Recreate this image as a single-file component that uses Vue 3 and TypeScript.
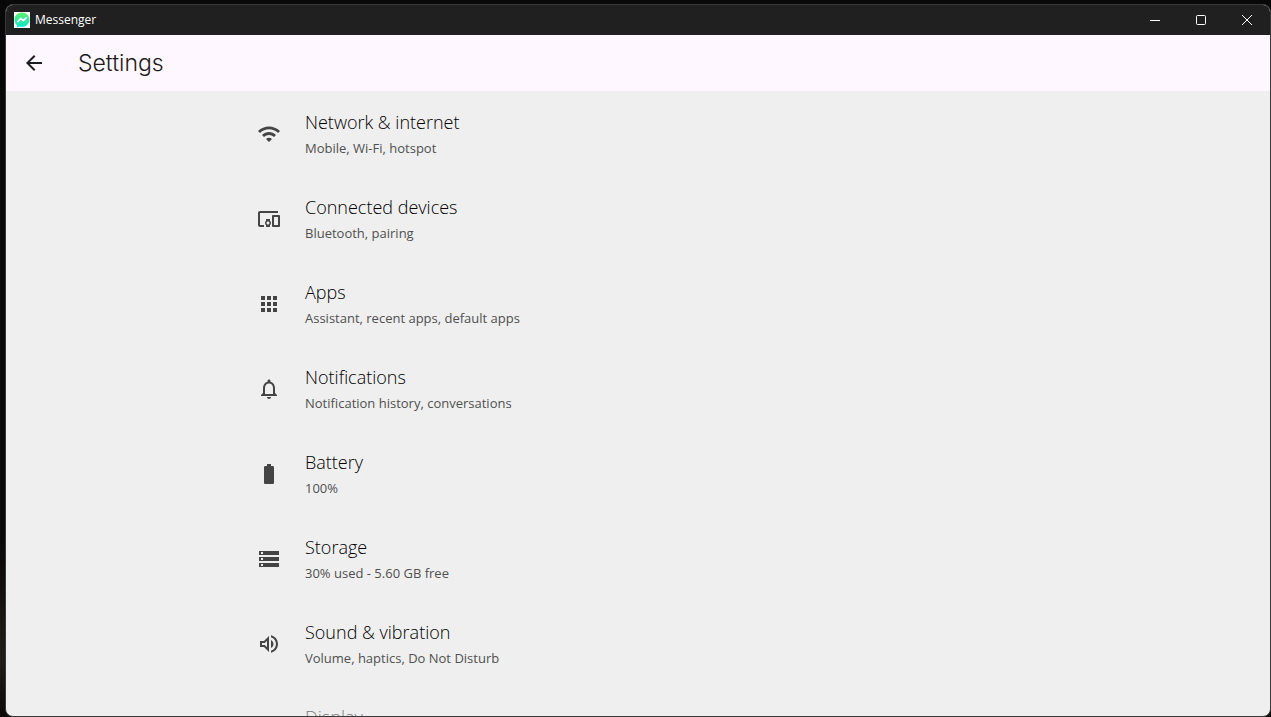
<script setup lang="ts">
interface SettingItem {
  title: string
  detail?: string
  icon: string
  faded?: boolean
}

const items: SettingItem[] = [
  {
    title: 'Network & internet',
    detail: 'Mobile, Wi-Fi, hotspot',
    icon: 'M1 9l2 2c4.970-4.970 13.030-4.970 18 0l2-2C16.930 2.930 7.080 2.930 1 9zm8 8l3 3 3-3c-1.650-1.660-4.340-1.660-6 0zm-4-4l2 2c2.760-2.760 7.240-2.760 10 0l2-2C15.140 9.140 8.870 9.140 5 13z',
  },
  {
    title: 'Connected devices',
    detail: 'Bluetooth, pairing',
    icon: 'M3 6h18V4H3c-1.100 0-2 .9-2 2v12c0 1.100.9 2 2 2h4v-2H3V6zm10 6H9v1.780c-.61.550-1 1.330-1 2.220s.39 1.670 1 2.220V20h4v-1.780c.61-.55 1-1.340 1-2.220s-.39-1.670-1-2.220V12zm-2 5.500c-.83 0-1.500-.67-1.500-1.500s.67-1.500 1.500-1.500 1.500.67 1.500 1.500-.67 1.500-1.500 1.500zM22 8h-6c-.5 0-1 .5-1 1v10c0 .5.5 1 1 1h6c.5 0 1-.5 1-1V9c0-.5-.5-1-1-1zm-1 10h-4v-8h4v8z',
  },
  {
    title: 'Apps',
    detail: 'Assistant, recent apps, default apps',
    icon: 'M4 8h4V4H4v4zm6 12h4v-4h-4v4zm-6 0h4v-4H4v4zm0-6h4v-4H4v4zm6 0h4v-4h-4v4zm6-10v4h4V4h-4zm-6 4h4V4h-4v4zm6 6h4v-4h-4v4zm0 6h4v-4h-4v4z',
  },
  {
    title: 'Notifications',
    detail: 'Notification history, conversations',
    icon: 'M12 22c1.100 0 2-.9 2-2h-4c0 1.100.9 2 2 2zm6-6v-5c0-3.070-1.630-5.640-4.500-6.320V4c0-.83-.67-1.500-1.500-1.500s-1.500.67-1.500 1.500v.68C7.640 5.360 6 7.920 6 11v5l-2 2v1h16v-1l-2-2zm-2 1H8v-6c0-2.480 1.510-4.500 4-4.500s4 2.020 4 4.500v6z',
  },
  {
    title: 'Battery',
    detail: '100%',
    icon: 'M15.670 4H14V2h-4v2H8.330C7.600 4 7 4.600 7 5.330v15.330C7 21.400 7.600 22 8.330 22h7.330c.74 0 1.340-.6 1.340-1.330V5.330C17 4.600 16.400 4 15.670 4z',
  },
  {
    title: 'Storage',
    detail: '30% used - 5.60 GB free',
    icon: 'M2 20h20v-4H2v4zm2-3h2v2H4v-2zM2 4v4h20V4H2zm4 3H4V5h2v2zm-4 7h20v-4H2v4zm2-3h2v2H4v-2z',
  },
  {
    title: 'Sound & vibration',
    detail: 'Volume, haptics, Do Not Disturb',
    icon: 'M3 9v6h4l5 5V4L7 9H3zm7-.17v6.340L7.830 13H5v-2h2.830L10 8.830zM16.500 12c0-1.770-1.020-3.290-2.500-4.030v8.050c1.480-.73 2.500-2.250 2.500-4.020zM14 3.230v2.060c2.890.86 5 3.540 5 6.710s-2.110 5.850-5 6.710v2.060c4.010-.91 7-4.490 7-8.770s-2.990-7.860-7-8.770z',
  },
  {
    title: 'Display',
    icon: '',
    faded: true,
  },
]
</script>

<template>
  <div class="desktop">
    <div class="window">
      <header class="titlebar">
        <svg class="logo" viewBox="0 0 16 16" aria-hidden="true">
          <defs>
            <linearGradient id="bubble" x1="0" y1="0" x2="0" y2="1">
              <stop offset="0" stop-color="#5df06c" />
              <stop offset="1" stop-color="#10e3d2" />
            </linearGradient>
          </defs>
          <path fill="#fff" d="M0 0h16v16H0z" />
          <path fill="url(#bubble)" d="M8 .5C3.700.5.5 3.600.5 7.700c0 2.200.9 4 2.300 5.300v2.500l2.500-1.100c.9.250 1.800.4 2.700.4 4.300 0 7.500-3.100 7.500-7.100S12.300.5 8 .5z" />
          <path d="M3.800 9.700 6.600 6.400 9.300 8.600 12.200 5.800" fill="none" stroke="#fff" stroke-width="1.600" stroke-linejoin="round" stroke-linecap="round" />
        </svg>
        <span class="app-name">Messenger</span>
        <div class="controls">
          <button type="button" aria-label="Minimize">
            <svg viewBox="0 0 12 12"><path d="M1 6.500h10" /></svg>
          </button>
          <button type="button" aria-label="Maximize">
            <svg viewBox="0 0 12 12"><rect x="1.500" y="1.500" width="9" height="9" rx="1" /></svg>
          </button>
          <button type="button" aria-label="Close">
            <svg viewBox="0 0 12 12"><path d="M1 1l10 10M11 1L1 11" /></svg>
          </button>
        </div>
      </header>
      <div class="appbar">
        <button class="back" type="button" aria-label="Back">
          <svg viewBox="0 0 24 24"><path d="M20 11H7.830l5.590-5.590L12 4l-8 8 8 8 1.410-1.410L7.830 13H20v-2z" /></svg>
        </button>
        <h1>Settings</h1>
      </div>
      <main class="content">
        <ul class="list">
          <li v-for="item in items" :key="item.title">
            <button class="row" :class="{ faded: item.faded }" type="button">
              <svg class="icon" viewBox="0 0 24 24" aria-hidden="true"><path :d="item.icon" /></svg>
              <span class="labels">
                <span class="title">{{ item.title }}</span>
                <span v-if="item.detail" class="detail">{{ item.detail }}</span>
              </span>
            </button>
          </li>
        </ul>
      </main>
    </div>
  </div>
</template>

<style>
body {
  margin: 0;
  background: #080808;
}
</style>

<style scoped>
.desktop {
  box-sizing: border-box;
  height: 100vh;
  padding: 4px 0 0 5px;
  background: linear-gradient(#080808 75%, #211c19 92%, #0c0909);
  font-family: "Segoe UI", "Open Sans", "Noto Sans", sans-serif;
}
.window {
  box-sizing: border-box;
  height: 100%;
  display: flex;
  flex-direction: column;
  overflow: hidden;
  border: 1px solid #383838;
  border-radius: 8px;
  background: #efefef;
}
.titlebar {
  flex: none;
  height: 30px;
  display: flex;
  align-items: center;
  padding-left: 8px;
  background: #202020;
  color: #fff;
}
.logo {
  width: 16px;
  height: 16px;
  margin-right: 5px;
}
.app-name {
  font-size: 12px;
  line-height: 16px;
}
.controls {
  display: flex;
  height: 100%;
  margin-left: auto;
}
button {
  border: 0;
  padding: 0;
  margin: 0;
  background: none;
  color: inherit;
  font: inherit;
  text-align: left;
}
.controls button {
  width: 46px;
  display: flex;
  align-items: center;
  justify-content: center;
}
.controls svg {
  width: 12px;
  height: 12px;
  fill: none;
  stroke: #fff;
  stroke-width: 1;
}
.appbar {
  flex: none;
  height: 56px;
  display: flex;
  align-items: center;
  background: #fef7ff;
  color: #1d1b20;
}
.back {
  width: 56px;
  height: 56px;
  display: flex;
  align-items: center;
  justify-content: center;
}
.back svg {
  width: 24px;
  height: 24px;
  fill: currentColor;
}
h1 {
  margin: 0 0 0 16px;
  font-family: "Segoe UI Variable", Inter, sans-serif;
  font-size: 23px;
  line-height: 29px;
  font-weight: 300;
}
.content {
  flex: 1;
  min-height: 0;
  overflow: hidden;
}
.list {
  max-width: 762px;
  margin: 0 auto;
  padding: 0;
  list-style: none;
}
.row {
  width: 100%;
  height: 85px;
  display: flex;
  align-items: center;
  gap: 24px;
}
.icon {
  flex: none;
  width: 24px;
  height: 24px;
  fill: #444;
}
.labels {
  display: flex;
  flex-direction: column;
  min-height: 54px;
}
.title {
  font-size: 18px;
  line-height: 30px;
  font-weight: 300;
  color: #000;
}
.detail {
  font-size: 13px;
  line-height: 22px;
  color: #505050;
}
.faded {
  opacity: 0.5;
}
</style>
